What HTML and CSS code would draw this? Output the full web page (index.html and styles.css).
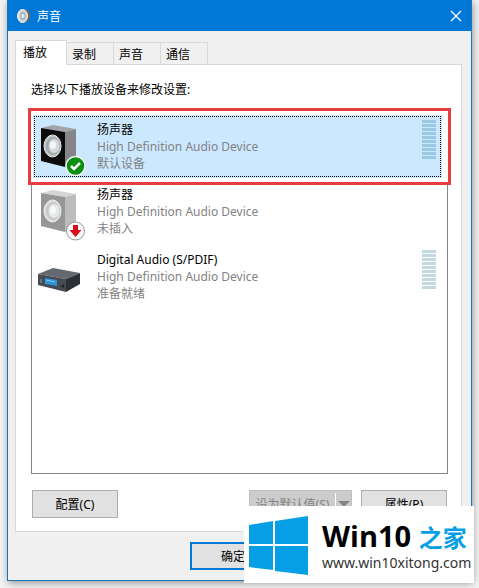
FILE: index.html
```html
<!DOCTYPE html>
<html lang="zh-CN">
<head>
    <meta charset="UTF-8">
    <meta name="viewport" content="width=device-width, initial-scale=1.0">
    <title>声音</title>
    <link rel="stylesheet" href="styles.css">
</head>
<body>
    <div class="window">
        <header class="titlebar">
            <svg class="app-icon" width="14" height="16" viewBox="0 0 14 16" aria-hidden="true">
                <path d="M5 1 L11 2 L13 5 L13 10 L10 14 L6 15Z" fill="#6b6460"/>
                <ellipse cx="5.500" cy="8" rx="5" ry="6.500" fill="#d8dadd" stroke="#f3f3f3"/>
                <ellipse cx="6" cy="8" rx="3" ry="4.500" fill="#a9bac9"/>
                <ellipse cx="6" cy="8" rx="1.500" ry="2" fill="#e9eef2"/>
            </svg>
            <h1>声音</h1>
            <button class="close" aria-label="关闭">
                <svg width="12" height="12" viewBox="0 0 12 12"><path d="M1 1 L11 11 M11 1 L1 11" stroke="#fff" stroke-width="1.300"/></svg>
            </button>
        </header>

        <main class="content">
            <div class="tabs" role="tablist">
                <button class="tab active" role="tab" aria-selected="true">播放</button>
                <button class="tab" role="tab">录制</button>
                <button class="tab" role="tab">声音</button>
                <button class="tab" role="tab">通信</button>
            </div>

            <section class="panel">
                <p class="hint">选择以下播放设备来修改设置:</p>

                <ul class="devices">
                    <li class="device selected">
                        <svg class="device-icon" width="48" height="58" viewBox="1 0 48 58" aria-hidden="true">
                            <path d="M4 8 L16 5 L39 9 L28 12Z" fill="#a3a3a8"/>
                            <path d="M28 12 L39 9 L39 42 L28 47Z" fill="#85858a"/>
                            <path d="M4 8 L28 12 L28 47 L4 41Z" fill="#0c0c0d"/>
                            <ellipse cx="15.500" cy="26" rx="8.500" ry="11" fill="#bfc3c6" stroke="#e4e6e7"/>
                            <ellipse cx="16" cy="26" rx="7" ry="9" fill="#a2a9ad"/>
                            <ellipse cx="17" cy="26" rx="5.500" ry="7" fill="#d5dadd"/>
                            <ellipse cx="16" cy="25" rx="3" ry="4" fill="#f4f6f7"/>
                            <circle cx="38.500" cy="46" r="9.500" fill="#0a8f12" stroke="#f2f7f2" stroke-width="1.500"/>
                            <path d="M34 46 L37 49 L43 43" fill="none" stroke="#fff" stroke-width="2.500"/>
                        </svg>
                        <div class="info">
                            <strong>扬声器</strong>
                            <span>High Definition Audio Device</span>
                            <span>默认设备</span>
                        </div>
                        <div class="meter"></div>
                    </li>
                    <li class="device">
                        <svg class="device-icon" width="48" height="58" viewBox="1 0 48 58" aria-hidden="true">
                            <path d="M4 8 L16 5 L39 9 L28 12Z" fill="#d5d5d6"/>
                            <path d="M28 12 L39 9 L39 42 L28 47Z" fill="#bcbcbe"/>
                            <path d="M4 8 L28 12 L28 47 L4 41Z" fill="#969697"/>
                            <ellipse cx="15.500" cy="26" rx="8.500" ry="11" fill="#d9dbdc" stroke="#ededee"/>
                            <ellipse cx="16" cy="26" rx="7" ry="9" fill="#c5c9cb"/>
                            <ellipse cx="17" cy="26" rx="5.500" ry="7" fill="#e6e8ea"/>
                            <ellipse cx="16" cy="25" rx="3" ry="4" fill="#f8f9f9"/>
                            <circle cx="38.500" cy="46" r="9" fill="#fafafa" stroke="#969696"/>
                            <path d="M36 40 H41 V45 H44.500 L38.500 52 L32.500 45 H36Z" fill="#d70b18"/>
                        </svg>
                        <div class="info">
                            <strong>扬声器</strong>
                            <span>High Definition Audio Device</span>
                            <span>未插入</span>
                        </div>
                    </li>
                    <li class="device">
                        <svg class="device-icon" width="48" height="58" viewBox="1 0 48 58" aria-hidden="true">
                            <path d="M1 24 L16 18 L43 23 L29 29Z" fill="#646970"/>
                            <path d="M29 29 L43 23 L43 34 L29 42Z" fill="#2b3036"/>
                            <path d="M1 24 L29 29 L29 42 L1 35Z" fill="#454b52"/>
                            <path d="M8 28 L20 30 L20 36 L8 34Z" fill="#2d92d8"/>
                            <path d="M9 30 L18 32" stroke="#7ccaf3"/>
                            <circle cx="26" cy="36" r="1.500" fill="#1c2024"/>
                            <path d="M4 29 V33" stroke="#999fa5"/>
                        </svg>
                        <div class="info">
                            <strong>Digital Audio (S/PDIF)</strong>
                            <span>High Definition Audio Device</span>
                            <span>准备就绪</span>
                        </div>
                        <div class="meter"></div>
                    </li>
                </ul>

                <div class="actions">
                    <button class="btn">配置(C)</button>
                    <button class="btn split" disabled>
                        <span class="split-text">设为默认值(S)</span>
                        <span class="split-arrow"></span>
                    </button>
                    <button class="btn">属性(P)</button>
                </div>
            </section>

            <footer class="footer">
                <button class="btn primary">确定</button>
            </footer>
        </main>
    </div>

    <div class="watermark">
        <svg width="60" height="60" viewBox="0 0 60 60" aria-hidden="true">
            <path d="M0 9 L24 5 V28 H0Z M26 5 L59 0 V28 H26Z M0 30 H24 V54 L0 51Z M26 30 H59 V59 L26 55Z" fill="#069fe6"/>
        </svg>
        <div class="brand">
            <div class="brand-name">Win10 <span>之家</span></div>
            <div class="brand-url">www.win10xitong.com</div>
        </div>
    </div>
</body>
</html>
```

FILE: styles.css
```css
* {
    box-sizing: border-box;
}

body {
    margin: 0;
    padding: 0 7px 7px;
    background-color: #f4f4f4;
    font-family: "Noto Sans", "Noto Sans CJK SC", sans-serif;
    font-size: 12px;
    color: #000;
}

button {
    font-family: inherit;
    font-size: inherit;
    color: inherit;
    padding: 0;
}

.window {
    border: 1px solid #1a75bb;
    border-top: none;
    background-color: #f0f0f0;
    box-shadow: 1px 2px 8px rgba(0, 0, 0, 0.4);
}

.titlebar {
    display: flex;
    align-items: center;
    height: 31px;
    padding: 0 9px;
    background-color: #0078d7;
    color: white;
}

.titlebar h1 {
    flex: 1;
    margin: 0 0 0 6px;
    font-size: 12px;
    font-weight: normal;
}

.close {
    display: flex;
    border: none;
    background: none;
}

.content {
    padding: 9px 9px 10px 7px;
}

.tabs {
    display: flex;
    align-items: flex-end;
    height: 25px;
    margin-bottom: -1px;
}

.tab {
    width: 47px;
    height: 23px;
    padding: 0 0 0 5px;
    border: 1px solid #d9d9d9;
    border-left: none;
    background-color: #f0f0f0;
    text-align: left;
}

.tab.active {
    width: 52px;
    height: 25px;
    padding: 0 0 2px 7px;
    border-left: 1px solid #d9d9d9;
    border-bottom: none;
    background-color: white;
}

.panel {
    padding: 16px 13px 13px 15px;
    border: 1px solid #d9d9d9;
    background-color: white;
}

.hint {
    margin: 0 0 13px;
    line-height: 17px;
}

.devices {
    min-height: 363px;
    margin: 0;
    padding: 3px 5px 0 1px;
    border: 1px solid #828790;
    list-style: none;
}

.device {
    display: flex;
    height: 65px;
    padding: 5px 6px 0 5px;
}

.device.selected {
    position: relative;
    height: 63px;
    margin-bottom: 2px;
    background-color: #cce8ff;
    outline: 1px dotted #000;
    outline-offset: -2px;
}

/* red highlight around the default device */
.device.selected::after {
    content: "";
    position: absolute;
    top: -7px;
    right: -9px;
    bottom: -7px;
    left: -5px;
    border: 3px solid #e63c42;
    box-shadow: inset 0 0 0 2px white;
}

.device-icon {
    flex: none;
    margin-right: 11px;
}

.info {
    flex: 1;
    display: flex;
    flex-direction: column;
    padding-top: 1px;
    line-height: 17px;
    color: #838383;
}

.info strong {
    font-weight: normal;
    color: #000;
}

.meter {
    width: 14px;
    height: 39px;
    background: repeating-linear-gradient(#c3d9e0 0, #c3d9e0 3px, transparent 3px, transparent 4px);
}

.selected .meter {
    background: repeating-linear-gradient(#9bc8e2 0, #9bc8e2 3px, transparent 3px, transparent 4px);
}

.actions {
    display: flex;
    gap: 9px;
    margin: 16px 1px 0;
}

.btn {
    width: 86px;
    height: 28px;
    border: 1px solid #adadad;
    background-color: #e1e1e1;
}

.btn.primary {
    border: 2px solid #0078d7;
}

.btn.split {
    display: flex;
    align-items: center;
    width: 103px;
    margin-left: auto;
    border-color: #bfbfbf;
    background-color: #ccc;
    color: #838383;
}

.split-text {
    flex: 1;
    white-space: nowrap;
}

.split-arrow {
    display: flex;
    align-items: center;
    justify-content: center;
    width: 16px;
    height: 22px;
    border-left: 1px solid white;
}

.split-arrow::after {
    content: "";
    border: 6px solid transparent;
    border-top-color: #838383;
    border-bottom: none;
}

.footer {
    display: grid;
    grid-template-columns: repeat(3, 86px);
    justify-content: end;
    gap: 7px;
    margin-top: 10px;
}

/* site badge over the corner of the dialog */
.watermark {
    position: absolute;
    right: 5px;
    bottom: 5px;
    display: flex;
    align-items: center;
    gap: 13px;
    width: 230px;
    height: 77px;
    padding: 3px 0 0 5px;
    background-color: white;
}

.watermark svg {
    flex: none;
}

.brand-name {
    font-family: "Open Sans", "Noto Sans CJK SC", sans-serif;
    font-size: 29px;
    line-height: 34px;
    font-weight: bold;
    white-space: nowrap;
}

.brand-name span {
    font-size: 24px;
    color: #069fe6;
}

.brand-url {
    padding-bottom: 3px;
    font-size: 14px;
    line-height: 16px;
    color: #333;
}
```
